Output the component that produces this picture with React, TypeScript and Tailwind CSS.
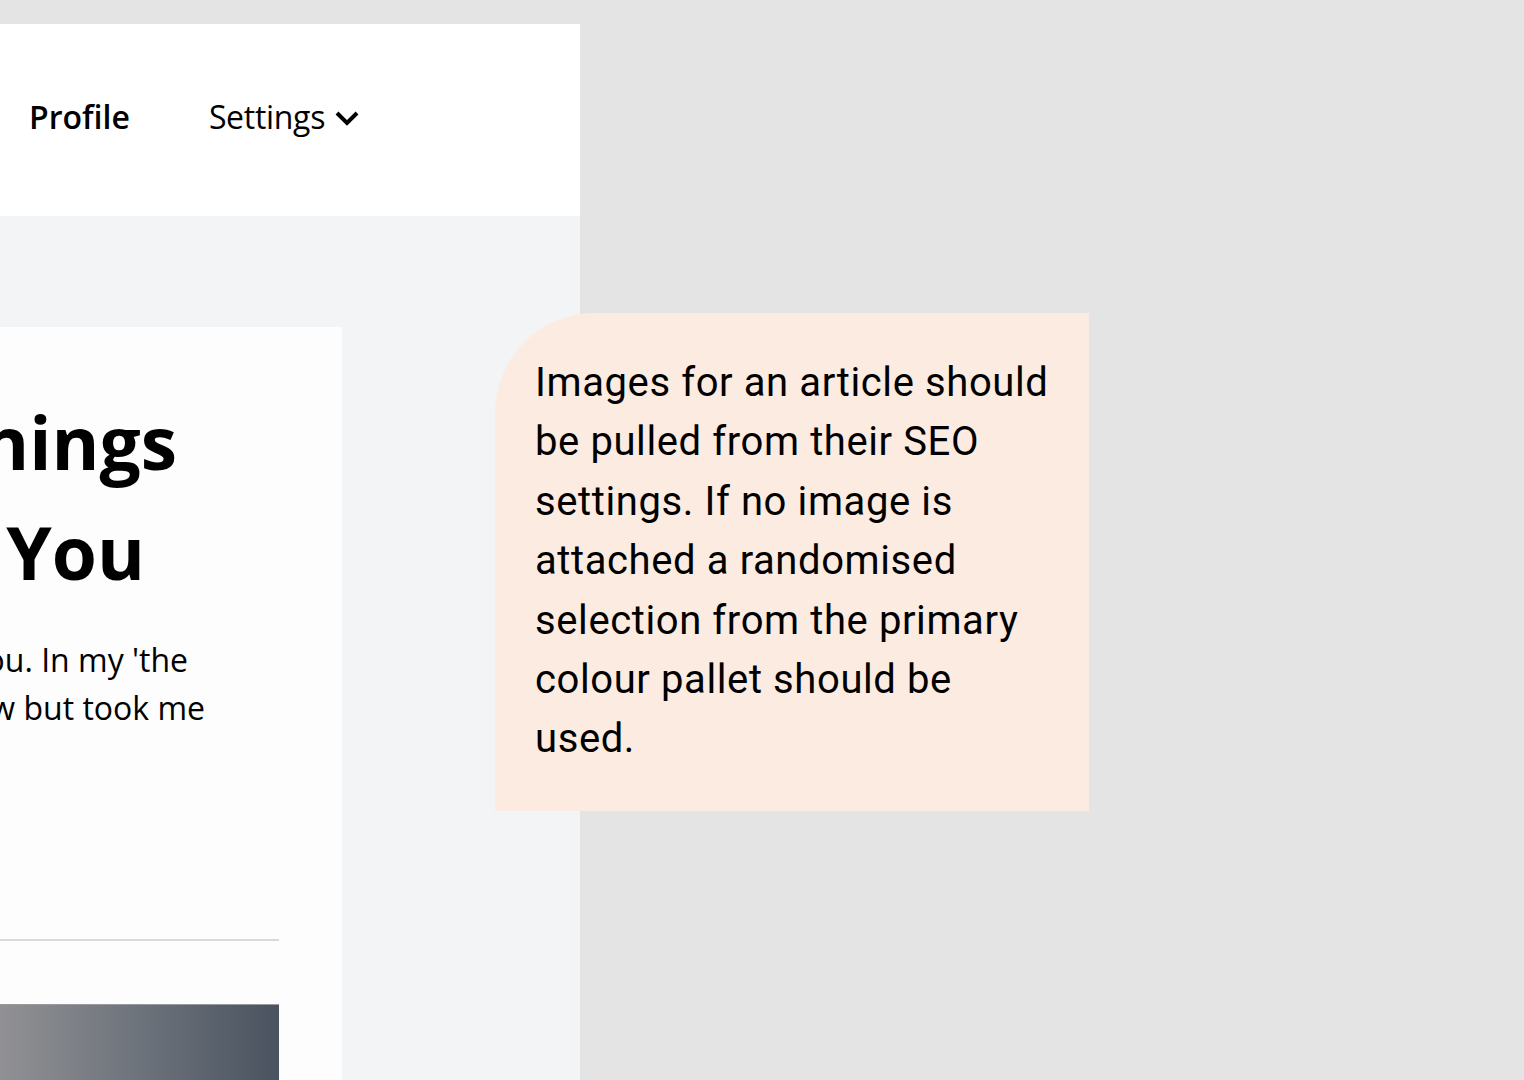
import React from 'react'

const openSans = { fontFamily: '"Open Sans", "Liberation Sans", sans-serif' }

// each visible line of the article is cut by the left edge of the frame,
// so lines are pinned on their right end and overflow to the left
const CutLine = ({ mr, children }: { mr: string; children: React.ReactNode }) => (
  <div className={`flex justify-end ${mr}`}>
    <span className="whitespace-nowrap">{children}</span>
  </div>
)

export default function App() {
  return (
    <div className="relative h-[1080px] w-full overflow-hidden bg-[#e4e4e4]">
      {/* page preview */}
      <div className="flex h-full w-[580px] flex-col pt-6" style={openSans}>
        <header className="flex h-[192px] shrink-0 items-center gap-[79px] bg-white pb-[6px] pl-[29px] text-[32px] text-black">
          <a className="font-semibold">Profile</a>
          <button className="flex items-center gap-[10px]">
            <span className="tracking-[-0.3px]">Settings</span>
            <svg width="24" height="16" viewBox="0 0 24 16" fill="none" className="mt-[2px]">
              <polyline points="2,3 12,13 22,3" stroke="black" strokeWidth="4" strokeLinecap="butt" strokeLinejoin="miter" />
            </svg>
          </button>
        </header>

        <main className="flex-1 bg-[#f3f4f6] pr-[238px] pt-[111px]">
          <article className="h-full bg-[#fdfdfd] pr-[63px] pt-[60px] text-black">
            <h1 className="text-[73px] font-bold leading-[110px]">
              <CutLine mr="mr-[102px]">Five Things</CutLine>
              <CutLine mr="mr-[134px]">Nobody Told You</CutLine>
            </h1>
            <div className="mt-[29px] text-[32px] leading-[48px]">
              <CutLine mr="mr-[91px]">the little lessons I wish I could pass on to you. In my 'the</CutLine>
              <CutLine mr="mr-[74px]">hindsight is everything' phase I learnt this now but took me</CutLine>
            </div>
            <hr className="mt-[207px] border-t-2 border-[#d9d9d9]" />
            <div className="mt-[63px] h-[200px] border-t border-[#9a9a9c] bg-gradient-to-r from-[#919194] via-[#6d737b] to-[#4a5360]" />
          </article>
        </main>
      </div>

      {/* annotation */}
      <div className="absolute left-[495px] top-[313px] w-[594px] rounded-tl-[100px] bg-[#fbebe0] pb-[42px] pl-10 pr-6 pt-10 text-[40px] leading-[59.4px] tracking-[0.6px] text-black" style={{ fontFamily: 'Roboto, "Liberation Sans", sans-serif' }}>
        <p className="whitespace-nowrap">
          Images for an article should<br />
          be pulled from their SEO<br />
          settings. If no image is<br />
          attached a randomised<br />
          selection from the primary<br />
          colour pallet should be<br />
          used.
        </p>
      </div>
    </div>
  )
}
